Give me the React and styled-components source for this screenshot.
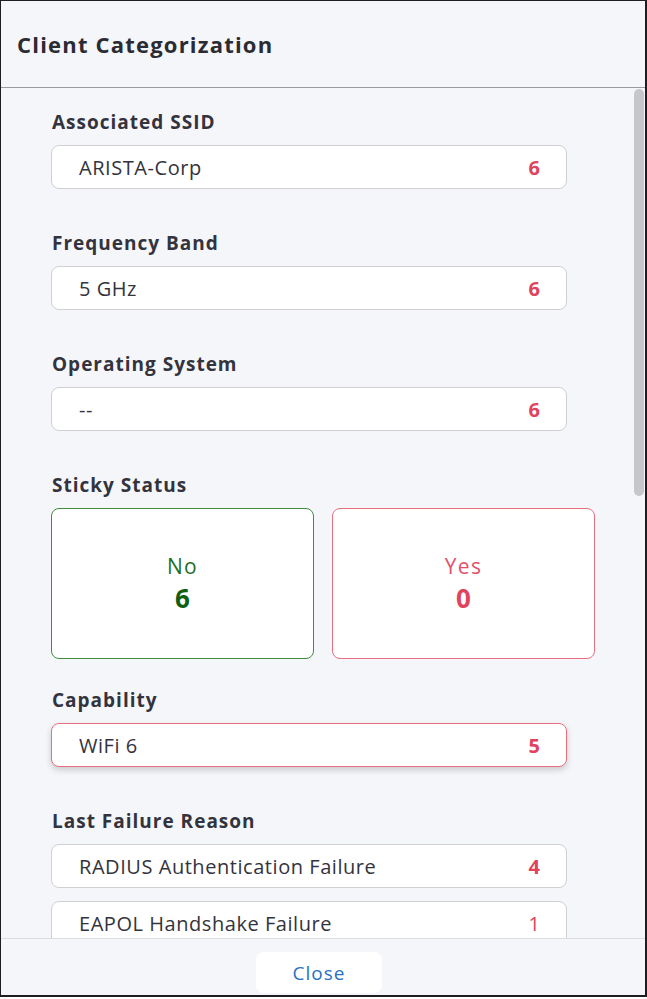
import React from 'react';
import styled, { createGlobalStyle } from 'styled-components';

const GlobalStyle = createGlobalStyle`
  html, body {
    margin: 0;
    padding: 0;
    background: #ffffff;
  }
  body {
    font-family: "Open Sans", "Noto Sans", sans-serif;
    color: #33333d;
  }
  * {
    box-sizing: border-box;
  }
`;

const Modal = styled.div`
  width: 647px;
  height: 997px;
  display: flex;
  flex-direction: column;
  background: #f5f6fa;
  border: 1px solid #1e1e22;
  border-right-width: 2px;
  border-bottom-width: 2px;
`;

const Header = styled.div`
  height: 87px;
  flex: none;
  display: flex;
  align-items: center;
  padding: 0 16px;
  border-bottom: 1px solid #9a9aa0;
`;

const Title = styled.h2`
  margin: 0;
  font-size: 22px;
  letter-spacing: 1.2px;
  font-weight: 700;
  color: #2b2b33;
`;

const BodyWrap = styled.div`
  flex: 1;
  min-height: 0;
  position: relative;
`;

const Body = styled.div`
  height: 100%;
  overflow-y: auto;
  padding: 22px 50px 40px;
  scrollbar-width: none;

  &::-webkit-scrollbar {
    display: none;
  }
`;

const ScrollThumb = styled.div`
  position: absolute;
  top: 1px;
  right: 1px;
  width: 10px;
  height: 407px;
  border-radius: 5px;
  background: #c7c7ca;
`;

const Section = styled.section`
  margin-bottom: ${(p) => (p.$tight ? '29px' : '42px')};
`;

const Label = styled.h3`
  margin: 0 0 11px;
  padding-left: 1px;
  font-size: 19px;
  letter-spacing: 1px;
  line-height: 24px;
  font-weight: 700;
  color: #33333d;
`;

const List = styled.div`
  width: 516px;
  display: flex;
  flex-direction: column;
  gap: 13px;
`;

const Item = styled.div`
  height: 44px;
  display: flex;
  align-items: center;
  justify-content: space-between;
  padding: 0 26px 0 27px;
  background: #ffffff;
  border: 1px solid ${(p) => (p.$selected ? '#e8717f' : '#cfcfd4')};
  border-radius: 8px;
  box-shadow: ${(p) => (p.$selected ? '0 3px 6px rgba(0, 0, 0, 0.18)' : 'none')};
  font-size: 20px;
  letter-spacing: 0.55px;
  color: #33333d;
`;

const Count = styled.span`
  color: #e0435b;
  font-weight: ${(p) => (p.$bold ? 700 : 400)};
  letter-spacing: 0;
`;

const Cards = styled.div`
  width: 544px;
  display: grid;
  grid-template-columns: 1fr 1fr;
  gap: 18px;
`;

const Card = styled.div`
  height: 151px;
  display: flex;
  flex-direction: column;
  align-items: center;
  justify-content: center;
  background: #ffffff;
  border: 1px solid ${(p) => p.$border};
  border-radius: 8px;
`;

const CardName = styled.div`
  font-size: 21px;
  letter-spacing: 1.3px;
  line-height: 28px;
  color: ${(p) => p.$color};
`;

const CardValue = styled.div`
  font-size: 26px;
  line-height: 36px;
  font-weight: 700;
  color: ${(p) => p.$color};
`;

const Footer = styled.div`
  height: 57px;
  flex: none;
  display: flex;
  align-items: flex-start;
  justify-content: center;
  padding: 13px 8px 0 0;
  border-top: 1px solid #dcdce0;
`;

const CloseButton = styled.button`
  width: 126px;
  height: 41px;
  border: none;
  border-radius: 8px;
  background: #ffffff;
  font-family: "Open Sans", sans-serif;
  font-size: 19px;
  letter-spacing: 1px;
  color: #2a70c2;
  cursor: pointer;
`;

const sections = [
  { label: 'Associated SSID', items: [{ name: 'ARISTA-Corp', count: 6, bold: true }] },
  { label: 'Frequency Band', items: [{ name: '5 GHz', count: 6, bold: true }] },
  { label: 'Operating System', items: [{ name: '--', count: 6, bold: true }] },
];

const later = [
  { label: 'Capability', items: [{ name: 'WiFi 6', count: 5, bold: true, selected: true }] },
  {
    label: 'Last Failure Reason',
    items: [
      { name: 'RADIUS Authentication Failure', count: 4, bold: true },
      { name: 'EAPOL Handshake Failure', count: 1 },
    ],
  },
];

function Category({ label, items }) {
  return (
    <Section>
      <Label>{label}</Label>
      <List>
        {items.map((it) => (
          <Item key={it.name} $selected={it.selected}>
            <span>{it.name}</span>
            <Count $bold={it.bold}>{it.count}</Count>
          </Item>
        ))}
      </List>
    </Section>
  );
}

export default function App() {
  return (
    <>
      <GlobalStyle />
      <Modal>
        <Header>
          <Title>Client Categorization</Title>
        </Header>
        <BodyWrap>
          <Body>
            {sections.map((s) => (
              <Category key={s.label} {...s} />
            ))}
            <Section $tight>
              <Label>Sticky Status</Label>
              <Cards>
                <Card $border="#3d8f3d">
                  <CardName $color="#1f6f1f">No</CardName>
                  <CardValue $color="#0f5e12">6</CardValue>
                </Card>
                <Card $border="#e8717f">
                  <CardName $color="#e2506a">Yes</CardName>
                  <CardValue $color="#e0435b">0</CardValue>
                </Card>
              </Cards>
            </Section>
            {later.map((s) => (
              <Category key={s.label} {...s} />
            ))}
          </Body>
          <ScrollThumb />
        </BodyWrap>
        <Footer>
          <CloseButton>Close</CloseButton>
        </Footer>
      </Modal>
    </>
  );
}
